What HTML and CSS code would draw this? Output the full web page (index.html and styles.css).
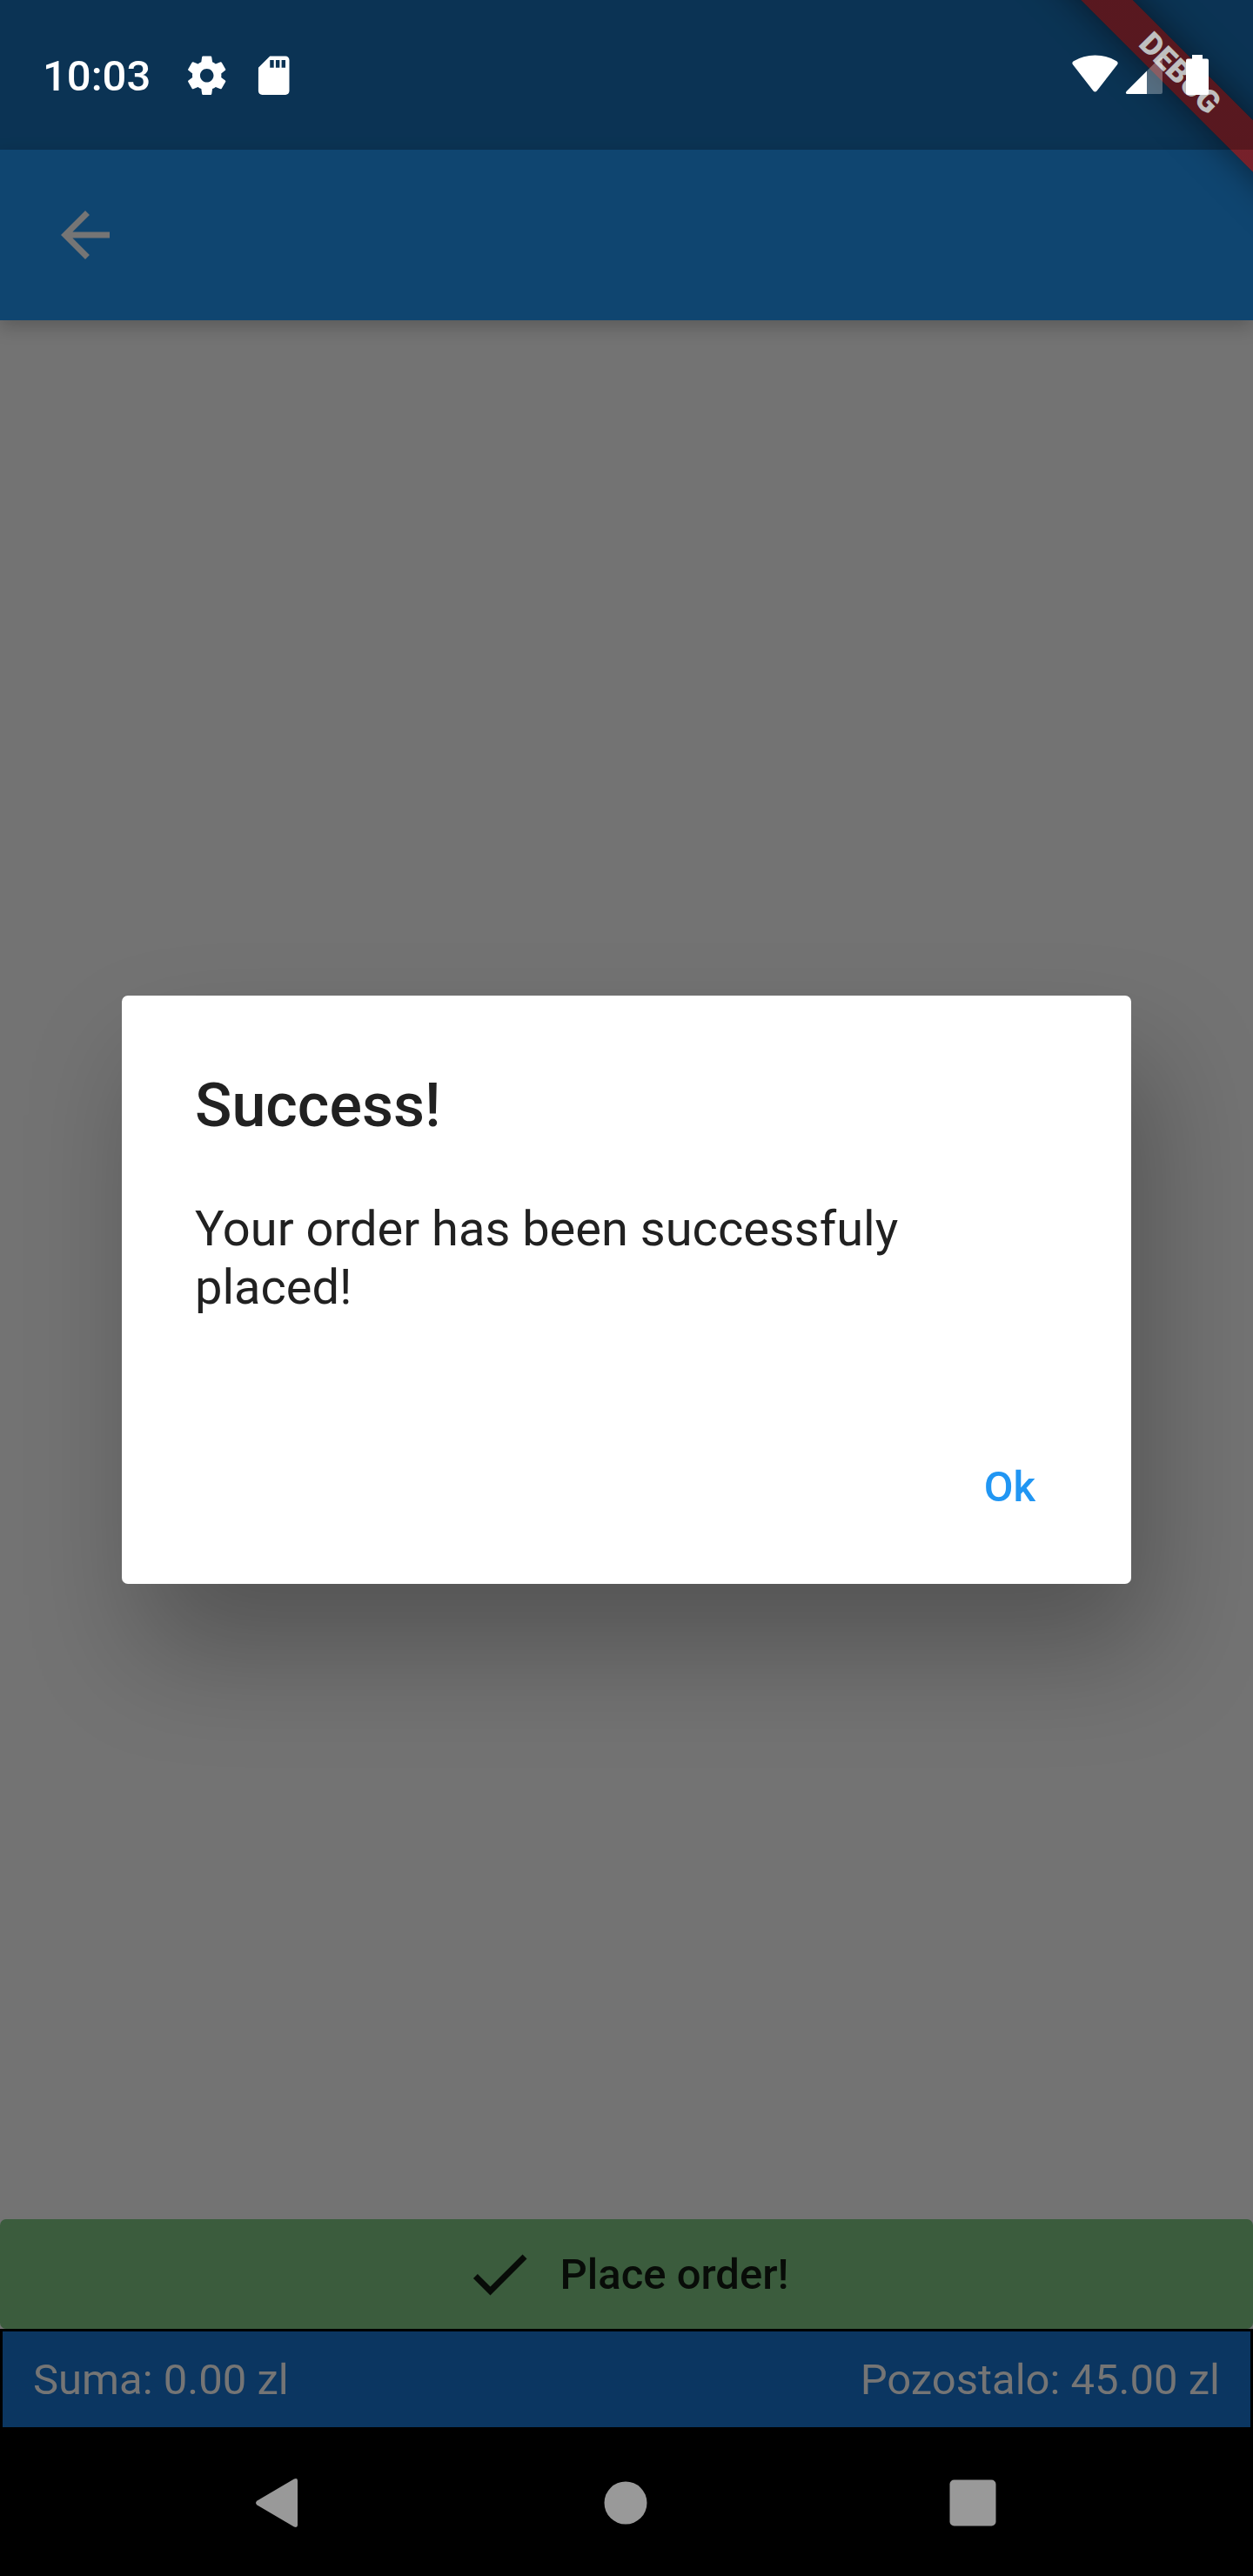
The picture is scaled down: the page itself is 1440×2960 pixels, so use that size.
FILE: index.html
```html
<!DOCTYPE html>
<html lang="en">
<head>
<meta charset="utf-8">
<title>Order</title>
<link rel="stylesheet" href="styles.css">
</head>
<body>
<div class="screen">
  <header class="status-bar">
    <div class="status-left">
      <span class="clock">10:03</span>
      <svg class="status-icon gear" viewBox="0 0 24 24"><path d="M19.43 12.98c.04-.32.07-.64.07-.98s-.03-.66-.07-.98l2.11-1.65c.19-.15.24-.42.12-.64l-2-3.46c-.12-.22-.39-.3-.61-.22l-2.49 1c-.52-.4-1.08-.73-1.69-.98l-.38-2.65C14.46 2.18 14.25 2 14 2h-4c-.25 0-.46.18-.49.42l-.38 2.65c-.61.25-1.17.59-1.69.98l-2.49-1c-.23-.09-.49 0-.61.22l-2 3.46c-.13.22-.07.49.12.64l2.11 1.65c-.04.32-.07.65-.07.98s.03.66.07.98l-2.11 1.65c-.19.15-.24.42-.12.64l2 3.46c.12.22.39.3.61.22l2.49-1c.52.4 1.08.73 1.69.98l.38 2.65c.03.24.24.42.49.42h4c.25 0 .46-.18.49-.42l.38-2.65c.61-.25 1.17-.59 1.69-.98l2.49 1c.23.09.49 0 .61-.22l2-3.46c.12-.22.07-.49-.12-.64l-2.11-1.65zM12 15.5c-1.93 0-3.5-1.57-3.5-3.5s1.57-3.5 3.5-3.5 3.5 1.57 3.5 3.5-1.57 3.5-3.5 3.5z"/></svg>
      <svg class="status-icon" viewBox="0 0 24 24"><path d="M18 2h-8L4.02 8 4 20c0 1.1.9 2 2 2h12c1.1 0 2-.9 2-2V4c0-1.1-.9-2-2-2zm-6 6h-2V4h2v4zm3 0h-2V4h2v4zm3 0h-2V4h2v4z"/></svg>
    </div>
    <svg class="status-right" viewBox="0 0 158 48">
      <path d="M1.200 12.500Q-.8 10 1.800 8.300Q13 1.500 26.500 1.500T51.200 8.300Q53.800 10 51.800 12.500L28.500 42.400Q26.500 44.700 24.500 42.400Z"/>
      <path opacity=".3" d="M86 19.500L100.500 5Q104 2 104 5V44Q104 46 102 46H86Z"/>
      <path d="M86 19.500V46H63.500Q60.800 45.500 62.500 43Z"/>
      <path d="M138 1h12v4.500h5q2 0 2 2v37.500q0 2-2 2h-22q-2 0-2-2V7.500q0-2 2-2h5z"/>
    </svg>
  </header>
  <nav class="app-bar">
    <svg class="back" viewBox="0 0 24 24"><path d="M20 11H7.830l5.590-5.590L12 4l-8 8 8 8 1.410-1.410L7.830 13H20v-2z"/></svg>
  </nav>
  <main class="content">
    <section class="dialog">
      <h1 class="dialog-title">Success!</h1>
      <p class="dialog-text">Your order has been successfuly placed!</p>
      <button class="dialog-action">Ok</button>
    </section>
  </main>
  <button class="place-order">
    <svg class="check" viewBox="0 0 24 24"><path d="M9 16.170L4.830 12l-1.420 1.410L9 19 21 7l-1.410-1.410z"/></svg>
    <span class="place-label">Place order!</span>
  </button>
  <div class="totals"><span>Suma: 0.00 zl</span><span>Pozostalo: 45.00 zl</span></div>
  <footer class="nav-bar">
    <svg viewBox="0 0 60 60"><path d="M5.500 27.500Q2.500 30 5.500 32.500L48 57.500Q52 59 52 55.500V4.500Q52 1 48 2.500Z"/></svg>
    <svg viewBox="0 0 60 60"><circle cx="30" cy="30" r="24.500"/></svg>
    <svg viewBox="0 0 60 60"><rect x="3.500" y="3.500" width="53" height="53" rx="5"/></svg>
  </footer>
  <div class="banner-clip"><div class="banner">DEBUG</div></div>
  <div class="status-scrim"></div>
</div>
</body>
</html>
```
FILE: styles.css
```css
* { box-sizing: border-box; }
body { margin: 0; font-family: Roboto, sans-serif; background: #000; }
button { border: 0; font: inherit; }
.screen {
  position: relative;
  width: 1440px;
  height: 2960px;
  overflow: hidden;
  display: flex;
  flex-direction: column;
  background: #737373;
}
.status-bar {
  height: 172px;
  flex: none;
  display: flex;
  justify-content: space-between;
  padding: 60px 50px 0 49px;
  background: #0f4570;
  fill: #fff;
  color: #fff;
}
.status-left, .status-right { position: relative; z-index: 3; }
.status-left { display: flex; align-items: flex-start; }
.clock { font-size: 49px; font-weight: 500; line-height: 56px; }
.status-icon { width: 53.400px; height: 53.400px; margin-left: 23.500px; }
.gear { margin-left: 38px; }
.status-right { width: 158px; height: 48px; margin-top: 2px; }
.app-bar {
  height: 196px;
  flex: none;
  display: flex;
  align-items: center;
  padding-left: 56px;
  background: #0f4570;
  box-shadow: 0 7px 20px rgba(0, 0, 0, .22);
}
.back { width: 84px; height: 84px; fill: #757575; }
.content { flex: 1; padding: 776.250px 140px 0; }
.dialog {
  height: 675.500px;
  padding: 85px 84px 0;
  display: flex;
  flex-direction: column;
  background: #fff;
  border-radius: 7px;
  color: #212121;
  box-shadow: 23px 75px 130px rgba(0, 0, 0, .27);
}
.dialog-title { margin: 0; font-size: 70px; font-weight: 500; line-height: 82px; }
.dialog-text { margin: 68px 0 0; font-size: 56px; line-height: 67px; }
.dialog-action {
  align-self: flex-end;
  margin-top: 167px;
  padding: 0 26px;
  font-size: 49px;
  font-weight: 500;
  line-height: 58px;
  background: none;
  color: #2196f3;
}
.place-order {
  height: 126px;
  flex: none;
  display: flex;
  align-items: center;
  justify-content: center;
  gap: 28px;
  padding: 0 2px 0 0;
  border-radius: 7px;
  background: #3b5c3d;
  color: #080c08;
  font-size: 49px;
  font-weight: 500;
}
.place-label { padding-top: 2px; }
.check { width: 84px; height: 84px; fill: #080c08; }
.totals {
  height: 116.500px;
  flex: none;
  display: flex;
  align-items: center;
  justify-content: space-between;
  padding: 1px 35px 0;
  border: 3.500px solid #000;
  background: #0b3661;
  color: #757575;
  font-size: 49px;
}
.nav-bar {
  height: 168px;
  flex: none;
  display: flex;
  justify-content: space-between;
  padding: 54px 292px 0 290px;
  background: #000;
}
.nav-bar svg { width: 60px; height: 60px; fill: #999; }
.banner-clip {
  position: absolute;
  top: 0;
  right: 0;
  width: 420px;
  height: 420px;
  overflow: hidden;
  z-index: 1;
}
.banner {
  position: absolute;
  left: 56px;
  top: 63px;
  width: 560px;
  height: 42px;
  transform: rotate(45deg);
  background: linear-gradient(rgba(183, 28, 28, .627), rgba(183, 28, 28, .627)), rgba(0, 0, 0, .4);
  box-shadow: 0 0 42px rgba(0, 0, 0, .5);
  color: #fff;
  font-size: 35.700px;
  font-weight: 900;
  line-height: 42px;
  text-align: center;
}
.status-scrim {
  position: absolute;
  inset: 0 0 auto;
  height: 172px;
  background: rgba(0, 0, 0, .25);
  z-index: 2;
}
```
